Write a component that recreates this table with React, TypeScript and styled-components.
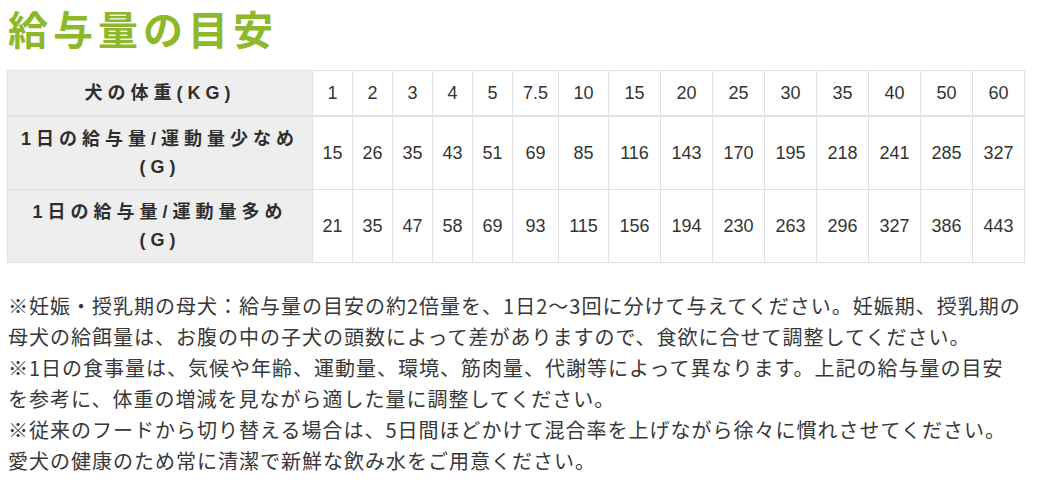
import styled, { createGlobalStyle } from "styled-components";

const Global = createGlobalStyle`
  html, body {
    margin: 0;
    padding: 0;
    background: #fff;
  }
  body {
    font-family: "Liberation Sans", "Noto Sans CJK JP", sans-serif;
    color: #333;
  }
`;

const Page = styled.div`
  padding: 0 7px;
`;

const Title = styled.h2`
  margin: 0;
  height: 70px;
  padding-left: 1px;
  font-family: "Noto Sans CJK JP", sans-serif;
  font-weight: 700;
  font-size: 40px;
  line-height: 56px;
  letter-spacing: 5px;
  color: #8cb82a;
`;

const Table = styled.table`
  width: 1017px;
  border-collapse: collapse;
  table-layout: fixed;
  border: 1px solid #e2e2e2;
`;

const Row = styled.tr<{ $head?: boolean }>`
  border-bottom: ${({ $head }) => ($head ? "2px solid #e2e2e2" : "1px solid #e2e2e2")};
`;

const Label = styled.th`
  background: #eeeeee;
  padding: 8px 0;
  font-family: "Liberation Sans", "Noto Sans CJK JP", sans-serif;
  font-weight: 700;
  font-size: 18px;
  line-height: 28px;
  letter-spacing: 5px;
  color: #2e2e2e;
  text-align: center;
  border-right: 1px solid #e2e2e2;
`;

const Cell = styled.td`
  padding: 8px 0;
  font-size: 18px;
  line-height: 28px;
  text-align: center;
  color: #333;
  border-right: 1px solid #e2e2e2;
`;

const Notes = styled.p`
  margin: 27px 0 0;
  padding-left: 1px;
  font-family: "Noto Sans CJK JP", sans-serif;
  font-size: 20px;
  line-height: 31px;
  letter-spacing: 1px;
  color: #383838;
  white-space: nowrap;
`;

const widths = [305, 40, 40, 40, 40, 40, 46, 50, 52, 52, 52, 52, 52, 52, 52, 52];

const rows: { label: React.ReactNode; values: string[]; head?: boolean }[] = [
  {
    label: "犬の体重(KG)",
    values: ["1", "2", "3", "4", "5", "7.5", "10", "15", "20", "25", "30", "35", "40", "50", "60"],
    head: true,
  },
  {
    label: (
      <>
        1日の給与量/運動量少なめ
        <br />
        (G)
      </>
    ),
    values: ["15", "26", "35", "43", "51", "69", "85", "116", "143", "170", "195", "218", "241", "285", "327"],
  },
  {
    label: (
      <>
        1日の給与量/運動量多め
        <br />
        (G)
      </>
    ),
    values: ["21", "35", "47", "58", "69", "93", "115", "156", "194", "230", "263", "296", "327", "386", "443"],
  },
];

const notes = [
  "※妊娠・授乳期の母犬：給与量の目安の約2倍量を、1日2～3回に分けて与えてください。妊娠期、授乳期の",
  "母犬の給餌量は、お腹の中の子犬の頭数によって差がありますので、食欲に合せて調整してください。",
  "※1日の食事量は、気候や年齢、運動量、環境、筋肉量、代謝等によって異なります。上記の給与量の目安",
  "を参考に、体重の増減を見ながら適した量に調整してください。",
  "※従来のフードから切り替える場合は、5日間ほどかけて混合率を上げながら徐々に慣れさせてください。",
  "愛犬の健康のため常に清潔で新鮮な飲み水をご用意ください。",
];

export default function App() {
  return (
    <Page>
      <Global />
      <Title>給与量の目安</Title>
      <Table>
        <colgroup>
          {widths.map((w, i) => (
            <col key={i} style={{ width: w }} />
          ))}
        </colgroup>
        <tbody>
          {rows.map((r, i) => (
            <Row key={i} $head={r.head}>
              <Label>{r.label}</Label>
              {r.values.map((v, j) => (
                <Cell key={j}>{v}</Cell>
              ))}
            </Row>
          ))}
        </tbody>
      </Table>
      <Notes>
        {notes.map((n, i) => (
          <span key={i}>
            {n}
            {i < notes.length - 1 && <br />}
          </span>
        ))}
      </Notes>
    </Page>
  );
}
